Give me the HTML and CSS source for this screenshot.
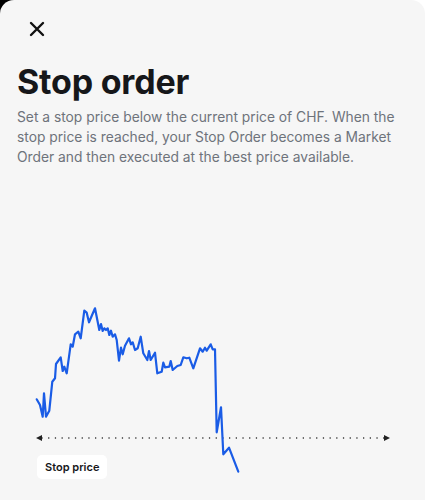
FILE: index.html
```html
<!DOCTYPE html>
<html lang="en">
<head>
  <meta charset="UTF-8">
  <meta name="viewport" content="width=device-width, initial-scale=1.0">
  <title>Stop order</title>
  <link rel="stylesheet" href="styles.css">
</head>
<body>
  <div class="sheet">
    <button class="close-btn" aria-label="Close">
      <svg width="16" height="16" viewBox="0 0 16 16">
        <path d="M2 2 L14 14 M14 2 L2 14" stroke="#111" stroke-width="2.4" stroke-linecap="round"/>
      </svg>
    </button>
    <h1 class="title">Stop order</h1>
    <p class="desc">Set a stop price below the current price of CHF. When the stop price is reached, your Stop Order becomes a Market Order and then executed at the best price available.</p>

    <div class="chart">
      <svg class="chart-svg" width="425" height="310" viewBox="0 190 425 310">
        <!-- stop price line -->
        <line x1="42" y1="438" x2="384" y2="438" stroke="#222" stroke-width="1.4" stroke-dasharray="0.1 6.6" stroke-linecap="round"/>
        <path d="M36 438 L42 435 L42 441 Z" fill="#222"/>
        <path d="M390 438 L384 435 L384 441 Z" fill="#222"/>
        <!-- price line -->
        <polyline fill="none" stroke="#1a5ce6" stroke-width="2.2" stroke-linejoin="round" stroke-linecap="round"
          points="36.7,399.3 40,405 42.7,416.7 44,393.3 46,416.7 49.3,410.7 52.3,381.7 55,378.3 56,364 60.7,357.3 62.7,371 64.3,366.7 66.7,373.3 70.7,344.3 72.7,346.7 75,334.3 78.3,331.7 80.7,338.3 84.3,310.7 86.7,312.7 89,322.3 95,308.3 99.3,330 101,324 102.7,331 104.3,328.3 106,330 107.7,328.3 109.3,335 111,330.7 112.7,336.7 115,334.3 116.7,340 119,360.7 121,347.7 122.7,354.3 125,345.7 129,338.3 131,344.3 132.7,342.3 135,350 137.7,348.3 140.7,336.7 143.3,353.3 147.3,360 149,351 150.7,360 155,352.7 157.3,373.3 161.7,371.7 163.3,362.7 165,367.3 169.3,366.7 170.7,361 172.7,370 177.3,366 180.7,365 183.3,357.3 186.7,358.3 189.3,357.7 193.3,368.3 200,348.3 202.7,351.7 205,347.7 206.7,350.7 210.7,344.3 212.7,349.3 215,349.3 216.7,432.3 221,407.3 223.3,454.3 229,447.7 238.3,471.7"/>
      </svg>
      <span class="stop-label">Stop price</span>
    </div>
  </div>
</body>
</html>
```

FILE: styles.css
```css
html, body {
  margin: 0;
  height: 100%;
}
body {
  background: linear-gradient(to right, #000 50%, #fff 50%);
  font-family: Inter, "Noto Sans", sans-serif;
  overflow: hidden;
}
.sheet {
  position: relative;
  height: 500px;
  background-color: #f6f6f6;
  border-radius: 14px 14px 0 0;
  padding: 0 17px;
}
.close-btn {
  display: block;
  border: none;
  background: none;
  padding: 0;
  margin: 0 0 0 12px;
  padding-top: 21px;
  width: 16px;
  height: 37px;
  cursor: pointer;
}
.title {
  margin: 24px 0 0;
  font-size: 34px;
  line-height: 42px;
  font-weight: 700;
  color: #16171a;
  letter-spacing: -0.2px;
}
.desc {
  margin: 4px 0 0;
  font-size: 13.8px;
  line-height: 20px;
  color: #6e737b;
}
.chart-svg {
  position: absolute;
  left: 0;
  top: 190px;
}
.stop-label {
  position: absolute;
  left: 37px;
  top: 455px;
  height: 24px;
  line-height: 24px;
  padding: 0 8px;
  background: #fff;
  border-radius: 5px;
  font-size: 11px;
  font-weight: 600;
  color: #16171a;
}
```
